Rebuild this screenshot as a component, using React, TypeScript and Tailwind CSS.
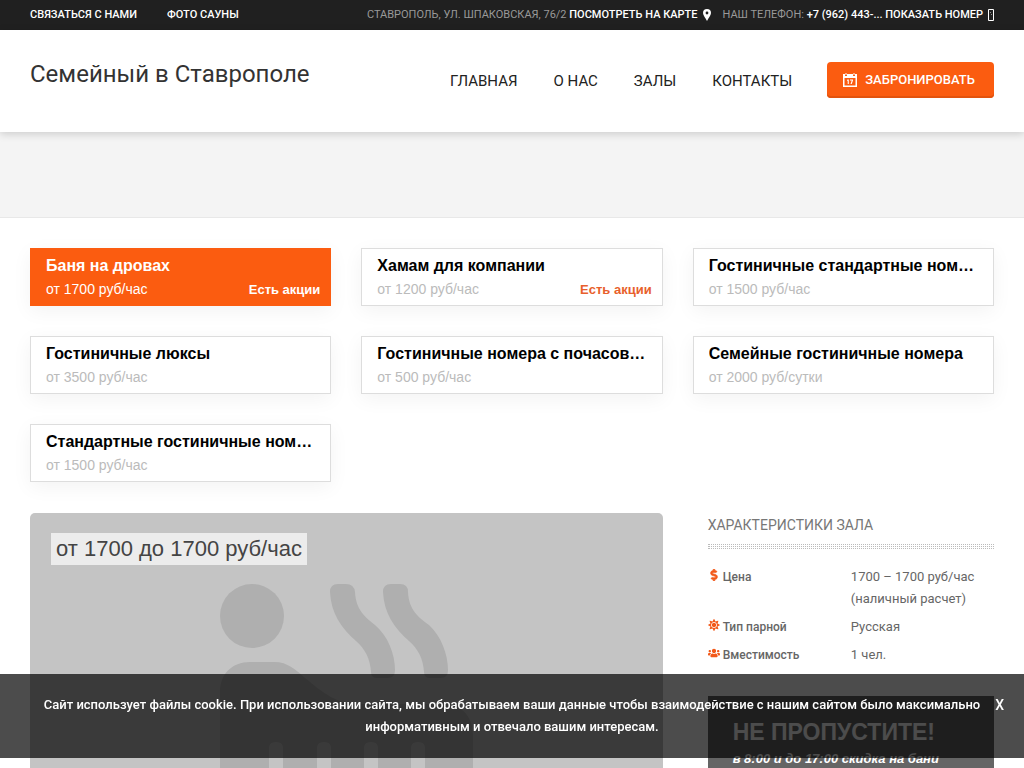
import { FaDollarSign, FaSun, FaUsers } from 'react-icons/fa';

const menu = ['Главная', 'О нас', 'Залы', 'Контакты'];

const halls = [
    { name: 'Баня на дровах', price: 'от 1700 руб/час', promo: true, active: true },
    { name: 'Хамам для компании', price: 'от 1200 руб/час', promo: true },
    { name: 'Гостиничные стандартные номера', price: 'от 1500 руб/час' },
    { name: 'Гостиничные люксы', price: 'от 3500 руб/час' },
    { name: 'Гостиничные номера с почасовой оплатой', price: 'от 500 руб/час' },
    { name: 'Семейные гостиничные номера', price: 'от 2000 руб/сутки' },
    { name: 'Стандартные гостиничные номера', price: 'от 1500 руб/час' },
];

const specs = [
    { icon: FaDollarSign, label: 'Цена', value: '1700 – 1700 руб/час (наличный расчет)', bold: true },
    { icon: FaSun, label: 'Тип парной', value: 'Русская' },
    { icon: FaUsers, label: 'Вместимость', value: '1 чел.' },
];

function PinIcon() {
    return (
        <svg viewBox="0 0 8 12" className="w-2 h-3" fill="currentColor" aria-hidden="true">
            <path fillRule="evenodd" d="M4 0a4 4 0 0 0-4 4c0 2.600 2.500 4.500 4 8 1.500-3.500 4-5.400 4-8a4 4 0 0 0-4-4zm0 2.600a1.400 1.400 0 1 1 0 2.800 1.400 1.400 0 0 1 0-2.800z" />
        </svg>
    );
}

function PhoneIcon() {
    return (
        <svg viewBox="0 0 6 12" className="w-1.5 h-3" fill="none" stroke="currentColor" aria-hidden="true">
            <path d="M.5.5h5v11h-5z" />
            <path d="M2 3.500h1M3 5.500h1" opacity=".5" />
        </svg>
    );
}

function CalendarIcon() {
    return (
        <svg viewBox="0 0 14 14" className="w-3.5 h-3.5" fill="currentColor" aria-hidden="true">
            <path fillRule="evenodd" d="M0 1h2v2h2V1h6v2h2V1h2v13H0zM1.500 5v7.500h11V5z" />
            <path d="M2.500 0h1v2h-1zM10.500 0h1v2h-1z" />
            <path d="M4.500 6.500h1.300V11H4.700V7.800h-.7V7zM7 6.500h3v1L8.700 11H7.500l1.200-3.400H7z" />
        </svg>
    );
}

function SaunaPicture() {
    return (
        <svg viewBox="-1 0 254 280" className="w-[254px]" fill="#afafaf" aria-hidden="true">
            <circle cx="32" cy="32" r="32" />
            <path d="M110 8Q110 0 118 0h8Q134 0 135 8C136 26 145 33 155 41 168 52 175 70 175 86Q175 94 168 94h-11Q151 94 151 88C150 74 145 65 136 57 121 44 111 29 110 8z" />
            <path d="M163 8Q163 0 171 0h9Q188 0 188 8C189 26 198 33 209 41 221 52 228 70 228 86Q228 94 221 94h-11Q204 94 204 88C203 74 198 65 189 57 174 44 164 29 163 8z" />
            <path d="M0 280V108C0 90 12 78 30 78H54C68 78 76 86 84 93 104 110 118 120 138 120H222C242 120 253 132 253 152V280H205V164Q205 158 198 158 191 158 191 164V280H158V164Q158 158 151 158 144 158 144 164V280H111V164Q111 158 104 158 97 158 97 164V280H63V164Q63 158 56 158 49 158 49 164V280z" />
        </svg>
    );
}

function TopBar() {
    return (
        <div className="bg-[#202020] h-[30px] px-[30px] flex items-center justify-between text-[11px] leading-[30px] uppercase font-medium text-white whitespace-nowrap">
            <div className="flex gap-[30px]">
                <a href="#contact">Связаться с нами</a>
                <a href="#photo">Фото сауны</a>
            </div>
            <div className="flex gap-3">
                <div className="flex items-center gap-[5px]">
                    <span><span className="font-normal text-[#999]">Ставрополь, ул. Шпаковская, 76/2</span> <a href="#map">Посмотреть на карте</a></span>
                    <PinIcon />
                </div>
                <div className="flex items-center gap-[5px]">
                    <span><span className="font-normal text-[#999]">Наш телефон:</span> <a href="#phone">+7 (962) 443-... Показать номер</a></span>
                    <PhoneIcon />
                </div>
            </div>
        </div>
    );
}

function Header() {
    return (
        <header className="relative bg-white h-[102px] px-[30px] flex items-start justify-between shadow-[0_2px_8px_rgba(0,0,0,0.17)]">
            <a href="#home" className="mt-7 text-2xl leading-8 text-[#333]">Семейный в Ставрополе</a>
            <div className="flex items-center mt-8">
                <nav className="flex gap-9 mr-[35px] pt-0.5 text-[15px] leading-6 uppercase text-[#222]">
                    {menu.map((item) => (
                        <a key={item} href="#menu">{item}</a>
                    ))}
                </nav>
                <button className="h-9 pl-4 pr-[19px] flex items-center gap-2 bg-[#fb5c10] shadow-[inset_0_-2px_0_#e2530e] rounded-sm text-white text-[13px] font-medium uppercase">
                    <CalendarIcon />
                    Забронировать
                </button>
            </div>
        </header>
    );
}

export default function App() {
    return (
        <div className="h-screen overflow-hidden bg-white font-[Roboto,sans-serif] text-[#666]">
            <TopBar />
            <Header />
            <div className="h-[86px] bg-[#f4f4f4] border-b border-[#e8e8e8]" />

            <main className="p-[30px]">
                {/* Halls */}
                <div className="grid grid-cols-3 gap-[30px] font-['Liberation_Sans',sans-serif]">
                    {halls.map((hall) => (
                        <a
                            key={hall.name}
                            href="#hall"
                            className={`block min-w-0 h-[58px] border py-1 pl-[15px] pr-2.5 shadow-[0_5px_20px_rgba(0,0,0,0.05)] ${hall.active ? 'bg-[#fb5c10] border-[#fb5c10] text-white' : 'bg-white border-[#ddd] text-black'
                                }`}
                        >
                            <div className="truncate text-base leading-[26px] font-bold mr-1.5">{hall.name}</div>
                            <div className="flex justify-between text-sm leading-5">
                                <span className={hall.active ? 'text-white' : 'text-[#bbb]'}>{hall.price}</span>
                                {hall.promo && (
                                    <span className={`text-[13px] leading-[22px] font-bold ${hall.active ? 'text-white' : 'text-[#e8602c]'}`}>Есть акции</span>
                                )}
                            </div>
                        </a>
                    ))}
                </div>

                <div className="grid grid-cols-3 gap-[30px] mt-[31px]">
                    {/* Photo */}
                    <div className="relative col-span-2 flex justify-center bg-[#c4c4c4] rounded-[5px] pt-[71px] pb-[60px]">
                        <SaunaPicture />
                        <span className="absolute left-[21px] top-5 bg-[#ececec] px-[5px] text-[22px] leading-8 text-[#444] font-['Liberation_Sans',sans-serif]">от 1700 до 1700 руб/час</span>
                    </div>

                    {/* Characteristics */}
                    <aside className="pl-[15px]">
                        <h2 className="text-sm leading-6 uppercase text-[#777]">Характеристики зала</h2>
                        <div className="mt-[7px] h-[5px] border-y border-dotted border-[#bbb] pt-px">
                            <div className="border-t border-dotted border-[#bbb]" />
                        </div>
                        <table className="w-full mt-3.5 table-fixed text-[13px] leading-[22px]">
                            <tbody>
                                {specs.map((spec) => {
                                    const Icon = spec.icon;
                                    return (
                                        <tr key={spec.label} className="align-top">
                                            <th scope="row" className="py-[3px] text-left text-xs leading-[22px] font-medium text-[#666]">
                                                <span className="flex gap-[3px]">
                                                    <Icon className={`w-3 h-3 mt-[3px] text-[#f2591a] ${spec.bold ? 'stroke-current stroke-[30]' : ''}`} />
                                                    {spec.label}
                                                </span>
                                            </th>
                                            <td className="py-[3px]">{spec.value}</td>
                                        </tr>
                                    );
                                })}
                            </tbody>
                        </table>

                        {/* Promo */}
                        <div className="mt-[27px] h-[120px] bg-[#656565] px-[25px] pt-5 text-white font-bold font-['Liberation_Sans',sans-serif] whitespace-nowrap">
                            <h3 className="text-[23px] leading-8">НЕ ПРОПУСТИТЕ!</h3>
                            <p className="text-[13px] leading-[22px] italic">в 8:00 и до 17:00 скидка на бани</p>
                        </div>
                    </aside>
                </div>
            </main>

            {/* Cookie notice */}
            <div className="fixed inset-x-0 bottom-2.5 bg-black/70 px-[30px] py-5 text-center text-[13px] leading-[22px] font-medium text-white">
                <p>Сайт использует файлы cookie. При использовании сайта, мы обрабатываем ваши данные чтобы взаимодействие с нашим сайтом было максимально информативным и отвечало вашим интересам.</p>
                <button className="absolute right-5 top-5 text-sm leading-[22px]">X</button>
            </div>
        </div>
    );
}
